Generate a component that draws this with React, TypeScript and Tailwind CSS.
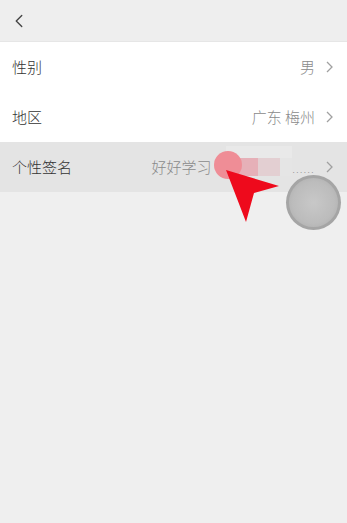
import { ChevronLeft } from "lucide-react";

const font = { fontFamily: '"Noto Sans CJK SC", "Noto Sans", sans-serif' };

function Arrow() {
  return (
    <svg width="7" height="12" viewBox="0 0 7 12" className="text-[#a0a0a0]">
      <polyline points="1,1 6,6 1,11" fill="none" stroke="currentColor" strokeWidth="1.3" />
    </svg>
  );
}

function Row({ label, children, active }: { label: string; children: React.ReactNode; active?: boolean }) {
  return (
    <div
      className={`flex h-[50px] items-center justify-between pl-3 pr-[14px] ${
        active ? "bg-[#e4e4e4]" : "bg-white"
      }`}
    >
      <span className="text-[15px] font-light text-[#333]">{label}</span>
      <div className="flex items-center gap-[11px]">
        <span className="text-[15px] font-light text-[#8a8a8a]">{children}</span>
        <Arrow />
      </div>
    </div>
  );
}

export default function App() {
  return (
    <div className="relative h-[523px] w-[347px] overflow-hidden bg-[#efefef]" style={font}>
      <div className="flex h-[41px] items-center bg-[#eeeeee] pl-2">
        <ChevronLeft size={22} strokeWidth={1.5} className="text-[#444]" />
      </div>
      <div className="h-px bg-[#e6e6e6]" />
      <Row label="性别">男</Row>
      <Row label="地区">广东 梅州</Row>
      <Row label="个性签名" active>
        好好学习
        <span className="inline-block w-[81px]" />
        <span className="text-[9px] tracking-[1.5px]">......</span>
      </Row>

      {/* blur mask over signature */}
      <div className="absolute left-[226px] top-[146px] h-[12px] w-[66px] bg-[#e9e9e9]" />
      <div className="absolute left-[226px] top-[158px] flex h-[18px]">
        <div className="w-[32px] bg-[#e6b0b8]" />
        <div className="w-[22px] bg-[#e3cfd2]" />
        <div className="w-[12px] bg-[#e5e5e5]" />
      </div>
      {/* tap dot */}
      <div className="absolute left-[214px] top-[151px] h-[28px] w-[28px] rounded-full bg-[#ef8d96]" />
      {/* pointer arrow */}
      <svg className="absolute left-0 top-0" width="347" height="523">
        <polygon points="226,170 279,186 254,193 246,222" fill="#ee0a1c" />
      </svg>
      {/* assistive touch */}
      <div className="absolute left-[286px] top-[175px] h-[55px] w-[55px] rounded-full bg-[#a5a5a5] p-[3px]">
        <div className="h-full w-full rounded-full bg-[radial-gradient(circle,#c8c8c8_0%,#bcbcbc_60%,#a8a8a8_100%)]" />
      </div>
    </div>
  );
}
